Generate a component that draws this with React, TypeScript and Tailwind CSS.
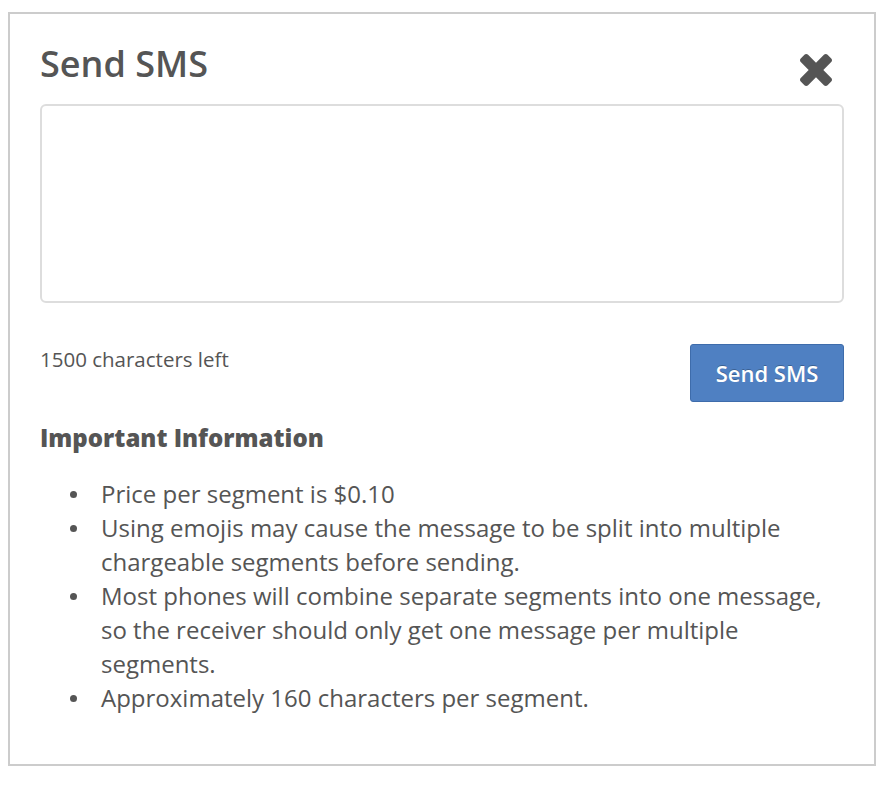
import React from "react";

export default function App() {
  const items = [
    "Price per segment is $0.10",
    "Using emojis may cause the message to be split into multiple chargeable segments before sending.",
    "Most phones will combine separate segments into one message, so the receiver should only get one message per multiple segments.",
    "Approximately 160 characters per segment.",
  ];
  return (
    <div className="w-[888px] h-[786px] bg-white pt-[12px] pl-[8px]" style={{ fontFamily: '"Open Sans", "Noto Sans", sans-serif' }}>
      <div className="w-[868px] h-[754px] border-2 border-[#cccccc] px-[30px] pt-[26px] text-[#555555]">
        <div className="flex h-[43px] items-start justify-between">
          <h1 className="mt-[2px] text-[36px] leading-[43px] font-semibold">Send SMS</h1>
          <button className="mt-[14px] mr-[12px] w-[32px] h-[32px] text-[#555555]" aria-label="Close">
            <svg viewBox="110 366 1188 1188" width="32" height="32" fill="currentColor">
              <path d="M1298 1322q0 40-28 68l-136 136q-28 28-68 28t-68-28l-294-294-294 294q-28 28-68 28t-68-28l-136-136q-28-28-28-68t28-68l294-294-294-294q-28-28-28-68t28-68l136-136q28-28 68-28t68 28l294 294 294-294q28-28 68-28t68 28l136 136q28 28 28 68t-28 68l-294 294 294 294q28 28 28 68z" />
            </svg>
          </button>
        </div>
        <textarea className="mt-[21px] block w-[804px] h-[199px] border-2 border-[#dddddd] rounded-[6px] resize-none outline-none p-2" />
        <div className="mt-[41px] flex items-start justify-between">
          <div className="mt-[3px] text-[20.5px] leading-[24px]">1500 characters left</div>
          <button className="w-[154px] h-[58px] bg-[#4f80c2] border border-[#3e6cab] rounded-[3px] text-white text-[22px] font-semibold" style={{ textShadow: "0 -1px 0 rgba(0,0,0,0.25)" }}>
            Send SMS
          </button>
        </div>
        <h2 className="mt-[20px] text-[24px] leading-[32px] font-extrabold">Important Information</h2>
        <ul className="mt-[23px] text-[24px] leading-[34px]">
          {items.map((t) => (
            <li key={t} className="flex">
              <span className="flex h-[34px] w-[61px] shrink-0 items-center justify-center pl-[5px]">
                <span className="block h-[7px] w-[7px] rounded-full bg-[#555555]" />
              </span>
              <span>{t}</span>
            </li>
          ))}
        </ul>
      </div>
    </div>
  );
}
